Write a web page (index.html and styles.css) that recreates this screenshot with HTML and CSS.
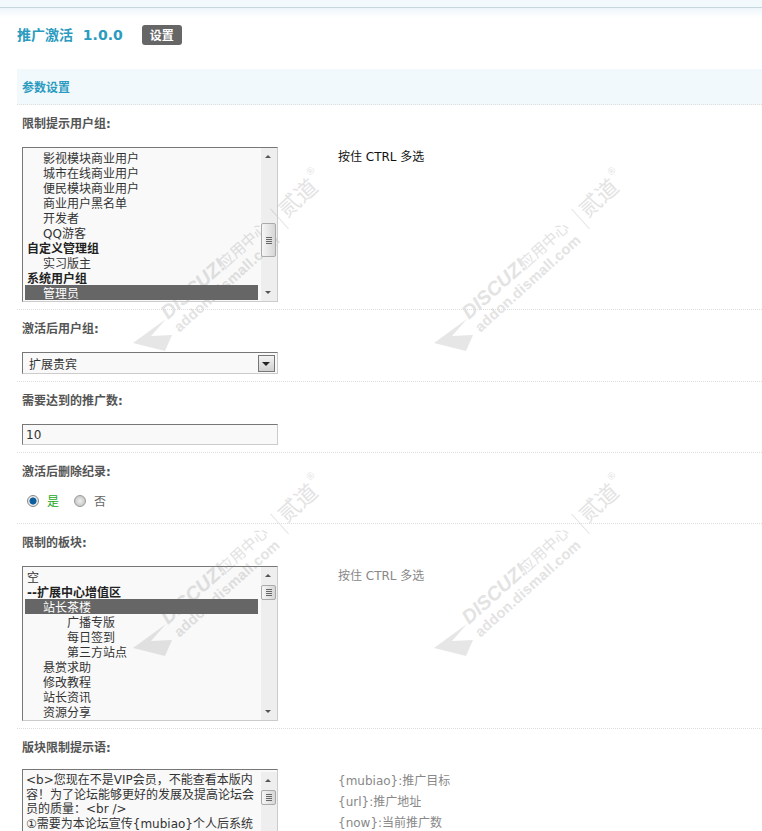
FILE: index.html
```html
<!DOCTYPE html>
<html lang="zh">
<head>
<meta charset="utf-8">
<title>推广激活</title>
<link rel="stylesheet" href="styles.css">
</head>
<body>
<svg class="mark mark-a" width="210" height="210" viewBox="0 0 210 210" aria-hidden="true"><use href="#wm"/></svg>
<svg class="mark mark-b" width="210" height="210" viewBox="0 0 210 210" aria-hidden="true">
  <g id="wm">
    <path class="mark-fill" d="M4 183 L37 159 L22 176 L43 175 L36 191 Z"/>
    <g transform="translate(39 160) rotate(-42)">
      <text class="mark-d" x="0" y="0">DISCUZ!</text>
      <text class="mark-c" x="76" y="0">应用中心</text>
      <text class="mark-e" x="156" y="4">贰道</text>
      <text class="mark-r" x="202" y="-12">®</text>
      <rect class="mark-fill" x="150" y="-14" width="1" height="27"/>
      <text class="mark-a2" x="0" y="17">addon.dismall.com</text>
    </g>
  </g>
</svg>
<svg class="mark mark-c1" width="210" height="210" viewBox="0 0 210 210" aria-hidden="true"><use href="#wm"/></svg>
<svg class="mark mark-d1" width="210" height="210" viewBox="0 0 210 210" aria-hidden="true"><use href="#wm"/></svg>

<div class="topbar"></div>
<main class="page">
  <header class="title">
    <h1>推广激活 1.0.0</h1>
    <a class="tab">设置</a>
  </header>
  <h2 class="section">参数设置</h2>

  <section class="row">
    <div class="label">限制提示用户组:</div>
    <div class="field">
      <div class="box list">
        <div class="items">
          <div class="item i1">影视模块商业用户</div>
          <div class="item i1">城市在线商业用户</div>
          <div class="item i1">便民模块商业用户</div>
          <div class="item i1">商业用户黑名单</div>
          <div class="item i1">开发者</div>
          <div class="item i1">QQ游客</div>
          <div class="item group">自定义管理组</div>
          <div class="item i1">实习版主</div>
          <div class="item group">系统用户组</div>
          <div class="item i1 sel">管理员</div>
        </div>
        <div class="bar"><span class="up"></span><span class="thumb thumb-low"><i></i></span><span class="down"></span></div>
      </div>
      <div class="hint hint-dark">按住 CTRL 多选</div>
    </div>
  </section>

  <section class="row">
    <div class="label">激活后用户组:</div>
    <div class="box drop">
      <span class="drop-text">扩展贵宾</span>
      <span class="dropbtn"></span>
    </div>
  </section>

  <section class="row">
    <div class="label">需要达到的推广数:</div>
    <input class="box num" type="text" value="10">
  </section>

  <section class="row">
    <div class="label">激活后删除纪录:</div>
    <div class="radios">
      <span class="radio on"></span><span class="yes">是</span>
      <span class="radio"></span><span class="no">否</span>
    </div>
  </section>

  <section class="row">
    <div class="label">限制的板块:</div>
    <div class="field">
      <div class="box list">
        <div class="items items-top">
          <div class="item">空</div>
          <div class="item group">--扩展中心增值区</div>
          <div class="item i1 sel">站长茶楼</div>
          <div class="item i2">广播专版</div>
          <div class="item i2">每日签到</div>
          <div class="item i2">第三方站点</div>
          <div class="item i1">悬赏求助</div>
          <div class="item i1">修改教程</div>
          <div class="item i1">站长资讯</div>
          <div class="item i1">资源分享</div>
        </div>
        <div class="bar"><span class="up"></span><span class="thumb thumb-high"><i></i></span><span class="down"></span></div>
      </div>
      <div class="hint">按住 CTRL 多选</div>
    </div>
  </section>

  <section class="row row-last">
    <div class="label label-tight">版块限制提示语:</div>
    <div class="field">
      <div class="box area">
        <div class="area-text">&lt;b&gt;您现在不是VIP会员，不能查看本版内容！为了论坛能够更好的发展及提高论坛会员的质量：&lt;br /&gt;<br>①需要为本论坛宣传{mubiao}个人后系统</div>
        <div class="bar bar-open"><span class="up"></span><span class="thumb thumb-high"><i></i></span></div>
      </div>
      <div class="hint hint-stack">
        <div>{mubiao}:推广目标</div>
        <div>{url}:推广地址</div>
        <div>{now}:当前推广数</div>
      </div>
    </div>
  </section>
</main>
</body>
</html>
```
FILE: styles.css
```css
* { box-sizing: border-box; }
html, body { margin: 0; padding: 0; height: 831px; overflow: hidden; background: #fff; }
body {
  position: relative;
  font: 12px/15px "DejaVu Sans", "Noto Sans CJK SC", sans-serif;
  color: #333;
}
.mark { position: absolute; z-index: 0; pointer-events: none; }
.mark-a { left: 129px; top: 160px; }
.mark-b { left: 430px; top: 160px; }
.mark-c1 { left: 129px; top: 465px; }
.mark-d1 { left: 430px; top: 465px; }
.mark-fill { fill: #e6e6e6; }
.mark text { fill: #e3e3e3; }
.mark-d { font: italic bold 19.5px "Liberation Sans", sans-serif; }
.mark-c { font: 15px "Noto Sans CJK SC", sans-serif; }
.mark-e { font: 22px "Noto Sans CJK SC", sans-serif; }
.mark-r { font: 10px "Liberation Sans", sans-serif; }
.mark-a2 { font: bold 14.5px "Liberation Sans", sans-serif; letter-spacing: .3px; }

.topbar {
  height: 18px;
  background: linear-gradient(#f2f9fd 0, #f2f9fd 7px, #c6d7dd 7px, #c6d7dd 8px, #eef6fb 8px, #fff 100%);
}
.page { position: relative; z-index: 1; padding-left: 17px; }

.title { display: flex; align-items: center; height: 34px; }
.title h1 {
  margin: 0 19px 0 0;
  font: bold 14px/20px "DejaVu Sans", "Noto Sans CJK SC", sans-serif;
  color: #2b9bbf;
  word-spacing: 5px;
  white-space: pre;
}
.tab {
  width: 40px; height: 20px;
  border-radius: 3px;
  background: #666;
  color: #fff;
  font-weight: bold;
  line-height: 22px;
  text-align: center;
}
.section {
  margin: 17px 0 0;
  height: 36px;
  padding-left: 5px;
  background: #f2f9fd;
  border-bottom: 1px dotted #ddd;
  color: #2b9bbf;
  font: bold 12px/38px "DejaVu Sans", "Noto Sans CJK SC", sans-serif;
}

.row { padding: 0 0 7px 5px; border-bottom: 1px dotted #ddd; }
.row-last { border-bottom: 0; }
.label {
  height: 42px;
  padding-top: 11px;
  font-weight: bold;
  line-height: 16px;
  color: #555;
}
.label-tight { height: 40px; }

.field { display: flex; align-items: flex-start; }
.box {
  display: block;
  width: 256px;
  border: 1px solid #ccc;
  border-top-color: #777;
  border-left-color: #777;
  background: rgba(0, 0, 0, .025);
}
.list { display: flex; height: 155px; padding: 1px 0 0 2px; overflow: hidden; }
.items { flex: 1; padding-top: 1px; color: #333; min-width: 0; }
.items-top { padding-top: 1px; }
.item { height: 15px; line-height: 19px; padding-left: 2px; white-space: nowrap; overflow: hidden; }
.group { font-weight: bold; color: #222; }
.i1 { padding-left: 18px; }
.i2 { padding-left: 42px; }
.sel { background: #666; color: #fff; }

.bar {
  flex: none;
  position: relative;
  width: 16px;
  margin-left: 3px;
  margin-top: -1px;
  background: rgba(0, 0, 0, .045);
}
.bar-open { align-self: stretch; }
.up, .down {
  position: absolute; left: 4px; width: 0; height: 0;
  border-left: 3px solid transparent;
  border-right: 3px solid transparent;
}
.up { top: 7px; border-bottom: 3px solid #555; }
.down { bottom: 7px; border-top: 3px solid #555; }
.thumb {
  position: absolute;
  left: 0; width: 15px;
  border: 1px solid #aaa;
  border-radius: 2px;
  background: linear-gradient(90deg, #f6f6f6, #d6d6d6);
  display: flex; align-items: center; justify-content: center;
}
.thumb i { width: 6px; height: 7px; background: repeating-linear-gradient(#666 0, #666 1px, transparent 1px, transparent 2px); }
.thumb-low { top: 75px; height: 34px; }
.thumb-high { top: 18px; height: 15px; }

.hint { margin: 2px 0 0 60px; color: #888; line-height: 16px; }
.hint-dark { color: #111; }
.hint-stack { margin-top: 2px; line-height: 21px; }

.drop {
  display: flex; align-items: center; justify-content: space-between;
  height: 22px;
  padding: 0 2px 0 6px;
  color: #333;
}
.drop-text { line-height: 19px; padding-top: 4px; }
.dropbtn {
  position: relative;
  width: 17px; height: 17px;
  border: 1px solid #777;
  background: linear-gradient(#f3f3f3, #d0d0d0);
}
.dropbtn::after {
  content: "";
  position: absolute; left: 3px; top: 6px;
  border-left: 4px solid transparent;
  border-right: 4px solid transparent;
  border-top: 4px solid #222;
}
.num {
  height: 21px;
  padding: 1px 3px 0;
  font: 12px/19px "DejaVu Sans", sans-serif;
  color: #333;
  outline: 0;
}
.radios { display: flex; height: 21px; align-items: flex-start; line-height: 14px; padding-left: 5px; }
.radio {
  width: 12px; height: 12px;
  border-radius: 50%;
  border: 1px solid #999;
  background: radial-gradient(circle, #eee 0, #bbb 100%);
  margin-right: 8px;
}
.radio.on { background: radial-gradient(circle, #0a5f9c 0, #0a5f9c 45%, #e8e8e8 55%); border-color: #888; }
.yes { color: #1aa61a; margin-right: 15px; width: 12px; }
.no { color: #666; }

.area { display: flex; height: 70px; padding: 3px 0 0 3px; overflow: hidden; }
.area-text { flex: 1; width: 232px; line-height: 14.5px; color: #333; word-break: break-all; }
```
